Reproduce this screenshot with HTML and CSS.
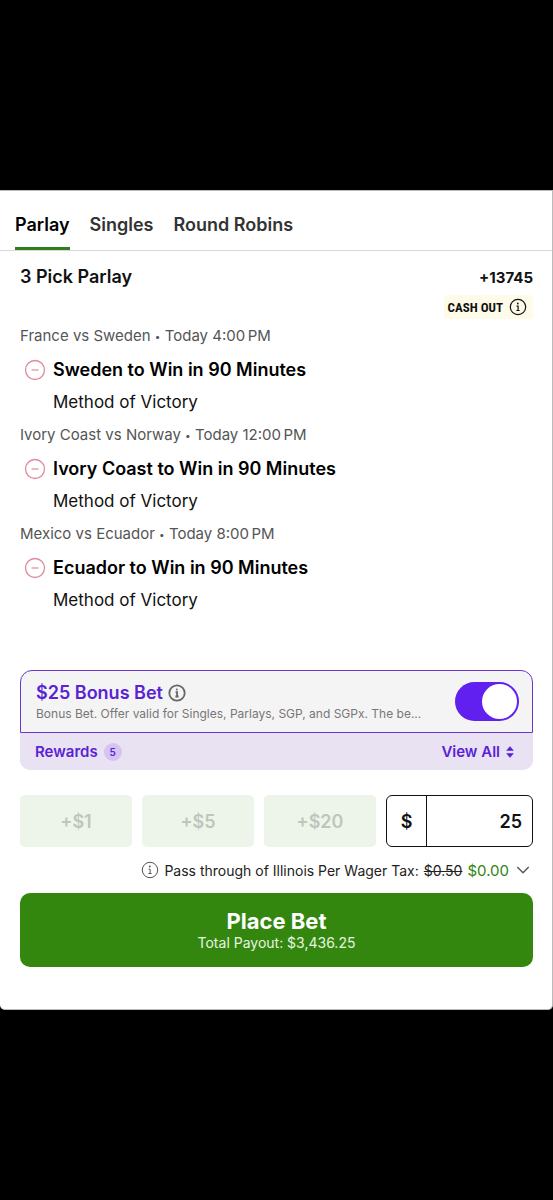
FILE: index.html
```html
<!DOCTYPE html>
<html lang="en">
<head>
<meta charset="utf-8">
<meta name="viewport" content="width=device-width, initial-scale=1">
<title>Bet Slip</title>
<link rel="stylesheet" href="styles.css">
</head>
<body>
<svg class="defs" aria-hidden="true">
  <symbol id="info" viewBox="0 0 18 18">
    <circle cx="9" cy="9" r="7.7" fill="none" stroke="currentColor"/>
    <circle cx="8.8" cy="5.5" r=".9" fill="currentColor" stroke="none"/>
    <path d="M7.6 8.2h1.5v4.2M7.4 12.5h3.2" fill="none" stroke="currentColor"/>
  </symbol>
  <symbol id="minus" viewBox="0 0 22 22">
    <circle cx="11" cy="11" r="9.5" fill="none" stroke="currentColor" stroke-width="1.3"/>
    <path d="M7.5 11h7" stroke="currentColor" stroke-width="1.2"/>
  </symbol>
</svg>
<main class="sheet">
  <nav class="tabs">
    <a class="tab tab-active" href="#parlay">Parlay</a>
    <a class="tab" href="#singles">Singles</a>
    <a class="tab" href="#round-robins">Round Robins</a>
  </nav>
  <section class="slip" id="parlay">
    <header class="slip-head">
      <h1>3 Pick Parlay</h1>
      <span class="odds">+13745</span>
    </header>
    <button class="cashout" type="button">CASH OUT <svg class="icon"><use href="#info"/></svg></button>
    <ul class="legs">
      <li class="leg">
        <p class="event">France vs Sweden <span class="dot">•</span> Today 4:00&#8198;PM</p>
        <div class="pick"><button class="remove" type="button" aria-label="Remove Sweden"><svg><use href="#minus"/></svg></button><h2>Sweden to Win in 90 Minutes</h2></div>
        <p class="market">Method of Victory</p>
      </li>
      <li class="leg">
        <p class="event">Ivory Coast vs Norway <span class="dot">•</span> Today 12:00&#8198;PM</p>
        <div class="pick"><button class="remove" type="button" aria-label="Remove Ivory Coast"><svg><use href="#minus"/></svg></button><h2>Ivory Coast to Win in 90 Minutes</h2></div>
        <p class="market">Method of Victory</p>
      </li>
      <li class="leg">
        <p class="event">Mexico vs Ecuador <span class="dot">•</span> Today 8:00&#8198;PM</p>
        <div class="pick"><button class="remove" type="button" aria-label="Remove Ecuador"><svg><use href="#minus"/></svg></button><h2>Ecuador to Win in 90 Minutes</h2></div>
        <p class="market">Method of Victory</p>
      </li>
    </ul>
    <section class="rewards">
      <div class="bonus">
        <div class="bonus-text">
          <label class="bonus-title" for="bonus">$25 Bonus Bet <svg class="icon icon-bold"><use href="#info"/></svg></label>
          <p class="bonus-terms">Bonus Bet. Offer valid for Singles, Parlays, SGP, and SGPx. The be...</p>
        </div>
        <input class="switch" id="bonus" type="checkbox" role="switch" checked>
      </div>
      <div class="rewards-bar">
        <span class="rewards-label">Rewards <span class="count">5</span></span>
        <button class="view-all" type="button">View All
          <svg class="sort" viewBox="0 0 8 12"><path d="M4 0.6 7.3 4.4H.7zM4 11.4.7 7.6h6.6z" fill="currentColor" stroke="currentColor" stroke-width=".6" stroke-linejoin="round"/></svg>
        </button>
      </div>
    </section>
    <form class="stake">
      <button class="quick" type="button" disabled>+$1</button>
      <button class="quick" type="button" disabled>+$5</button>
      <button class="quick" type="button" disabled>+$20</button>
      <div class="amount">
        <label for="wager">$</label>
        <input id="wager" type="text" inputmode="decimal" value="25">
      </div>
    </form>
    <div class="tax">
      <svg class="icon icon-muted"><use href="#info"/></svg>
      <span>Pass through of Illinois Per Wager Tax:</span>
      <s>$0.50</s>
      <span class="free">$0.00</span>
      <button class="expand" type="button" aria-label="Show tax details"><svg viewBox="0 0 14 8"><path d="M1.3 1 7 6.8 12.7 1" fill="none" stroke="currentColor" stroke-width="1.4"/></svg></button>
    </div>
    <button class="place" type="button"><strong>Place Bet</strong><span>Total Payout: $3,436.25</span></button>
  </section>
</main>
</body>
</html>
```
FILE: styles.css
```css
* { box-sizing: border-box; }

body {
  margin: 0;
  padding: 190px 0;
  background: #000;
  color: #111;
  font-family: Inter, "Liberation Sans", sans-serif;
}

h1, h2, p, ul { margin: 0; padding: 0; }
ul { list-style: none; }
button, input { font: inherit; color: inherit; }
button { border: 0; padding: 0; background: none; }
svg { display: block; flex: none; }
.defs { position: absolute; width: 0; height: 0; }

.sheet {
  background: #fff;
  border: 1px solid #bbb;
  border-left: 0;
  border-radius: 0 0 5px 5px;
}

.tabs {
  display: flex;
  gap: 20px;
  padding: 0 15px;
  border-bottom: 1px solid #d8d8d8;
}
.tab {
  padding: 22px 0 10px;
  border-bottom: 3px solid transparent;
  color: #333;
  font-size: 18px;
  font-weight: 600;
  line-height: 24px;
  text-decoration: none;
}
.tab-active { color: #000; border-color: #2f7d1c; }

.slip { display: flex; flex-direction: column; padding: 14px 19px 42px 20px; }
.slip-head { display: flex; justify-content: space-between; align-items: center; }
.slip-head h1 { font-size: 18px; font-weight: 600; line-height: 24px; }
.odds { font-size: 15px; font-weight: 700; }

.icon { width: 18px; height: 18px; stroke-width: 1.2; }
.icon-bold { color: #666; stroke-width: 1.8; }
.icon-muted { color: #555; stroke-width: 1; }

.cashout {
  display: flex;
  align-items: center;
  align-self: flex-end;
  gap: 6px;
  height: 24px;
  margin-top: 6px;
  padding: 0 6px 0 4px;
  border-radius: 3px;
  background: #fffbe9;
  font-family: "Roboto Condensed", "Liberation Sans Narrow", "Liberation Sans", sans-serif;
  font-size: 13px;
  font-weight: 700;
}

.legs { padding-top: 5px; }
.leg { padding-bottom: 5px; }
.event { color: #555; font-size: 15px; line-height: 24px; }
.dot { font-size: 10px; vertical-align: 1px; }
.pick { display: flex; align-items: center; gap: 7px; padding: 6px 0 0 4px; }
.pick h2 { font-size: 18px; font-weight: 600; line-height: 32px; color: #000; }
.remove { color: #e08a9a; }
.remove svg { width: 22px; height: 22px; }
.market { padding-left: 33px; font-size: 17px; line-height: 32px; }

.rewards { margin-top: 49px; }
.bonus {
  display: flex;
  align-items: center;
  gap: 12px;
  height: 63px;
  padding: 0 13px 0 15px;
  border: 1px solid #6a35d0;
  border-radius: 12px 12px 0 0;
  background: #f4f4f4;
}
.bonus-text { flex: 1; min-width: 0; }
.bonus-title {
  display: flex;
  align-items: center;
  gap: 5px;
  color: #5a22d6;
  font-size: 18px;
  font-weight: 600;
  line-height: 24px;
}
.bonus-terms {
  overflow: hidden;
  color: #777;
  font-size: 12px;
  line-height: 18px;
  text-overflow: ellipsis;
  white-space: nowrap;
}
.switch {
  flex: none;
  display: flex;
  justify-content: flex-end;
  width: 64px;
  height: 39px;
  margin: 0;
  padding: 2px;
  border-radius: 20px;
  background: #611ff0;
  appearance: none;
}
.switch::before { content: ""; width: 35px; border-radius: 50%; background: #fff; }

.rewards-bar {
  display: flex;
  justify-content: space-between;
  align-items: center;
  height: 37px;
  padding: 0 19px 0 15px;
  border-radius: 0 0 10px 10px;
  background: #e8e2f3;
  color: #5a22d6;
  font-size: 15px;
  font-weight: 600;
}
.rewards-label, .view-all { display: flex; align-items: center; gap: 6px; }
.count {
  width: 18px;
  border-radius: 50%;
  background: #d5c4f1;
  font-size: 10px;
  line-height: 18px;
  text-align: center;
}
.sort { width: 8px; height: 12px; }

.stake {
  display: grid;
  grid-template-columns: repeat(3, 112fr) 147fr;
  gap: 10px;
  height: 52px;
  margin-top: 25px;
}
.quick {
  border-radius: 5px;
  background: #edf5ea;
  color: #bfc5bd;
  font-size: 18px;
  font-weight: 600;
}
.amount {
  display: flex;
  min-width: 0;
  border: 1px solid #111;
  border-radius: 6px;
  font-size: 18px;
  font-weight: 600;
}
.amount label {
  display: grid;
  place-items: center;
  width: 40px;
  border-right: 1px solid #111;
}
.amount input {
  flex: 1;
  min-width: 0;
  padding: 0 10px;
  border: 0;
  background: none;
  text-align: right;
}

.tax {
  display: flex;
  justify-content: flex-end;
  align-items: center;
  gap: 5px;
  height: 46px;
  padding-right: 3px;
  color: #222;
  font-size: 14px;
}
.free { color: #2f850f; font-size: 15px; }
.expand { margin-left: 2px; color: #555; }
.expand svg { width: 14px; height: 8px; }

.place {
  display: flex;
  flex-direction: column;
  align-items: center;
  justify-content: center;
  height: 74px;
  padding-top: 2px;
  border-radius: 10px;
  background: #33870f;
  color: #fff;
  font-size: 14px;
  line-height: 20px;
}
.place strong { font-size: 22px; font-weight: 700; line-height: 24px; }
.place span { color: #e8f5e0; }
```
